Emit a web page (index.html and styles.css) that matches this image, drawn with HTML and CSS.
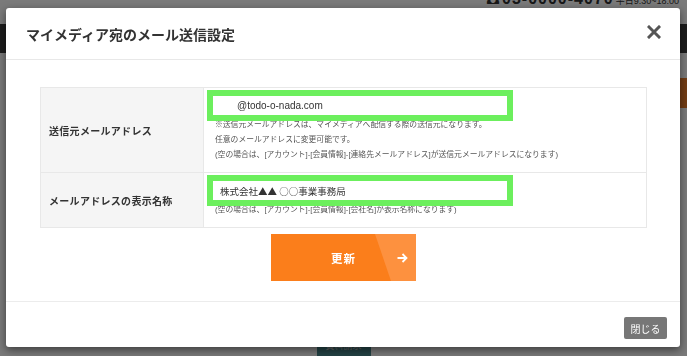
FILE: index.html
```html
<!DOCTYPE html>
<html>
<head>
	<meta charset="utf-8">
	<title>マイメディア宛のメール送信設定</title>
	<link rel="stylesheet" href="styles.css">
</head>
<body>
	<div class="site">
		<div class="site-top">
			<span class="tel">☎03-0000-4070</span>
			<span class="hours">平日9:30~18:00</span>
		</div>
		<div class="site-nav"></div>
		<div class="site-main">
			<div class="site-banner"></div>
		</div>
		<div class="site-foot">
			<div class="site-btn">資料請求</div>
		</div>
	</div>

	<div class="overlay"></div>

	<div class="modal">
		<div class="modal-header">
			<h2>マイメディア宛のメール送信設定</h2>
			<button class="modal-x" aria-label="閉じる">
				<svg width="14" height="14" viewBox="0 0 14 14">
					<path d="M2 2 L12 12 M12 2 L2 12" stroke="#555" stroke-width="3" stroke-linecap="square"/>
				</svg>
			</button>
		</div>

		<div class="modal-body">
			<table class="form-table">
				<tr class="row-mail">
					<th>送信元メールアドレス</th>
					<td>
						<input class="field mail" type="text" value="@todo-o-nada.com">
						<p class="note">※送信元メールアドレスは、マイメディアへ配信する際の送信元になります。</p>
						<p class="note">任意のメールアドレスに変更可能です。</p>
						<p class="note">(空の場合は、[アカウント]-[会員情報]-[連絡先メールアドレス]が送信元メールアドレスになります)</p>
					</td>
				</tr>
				<tr>
					<th>メールアドレスの表示名称</th>
					<td>
						<input class="field name" type="text" value="株式会社▲▲ ○○事業事務局">
						<p class="note">(空の場合は、[アカウント]-[会員情報]-[会社名]が表示名称になります)</p>
					</td>
				</tr>
			</table>

			<button class="submit-btn">
				<span class="submit-label">更新</span>
				<svg class="submit-arrow" width="11" height="10" viewBox="0 0 11 10">
					<path d="M0.5 5 H9.5 M5.5 1 L9.5 5 L5.5 9" fill="none" stroke="#fff" stroke-width="1.8"/>
				</svg>
			</button>
		</div>

		<div class="modal-footer">
			<button class="close-btn">閉じる</button>
		</div>
	</div>
</body>
</html>
```

FILE: styles.css
```css
body {
	margin: 0;
	padding: 0;
	width: 687px;
	height: 356px;
	overflow: hidden;
	background-color: #ffffff;
	font-family: "Liberation Sans", "Noto Sans CJK JP", sans-serif;
	color: #333;
}

/* page behind the dialog */
.site {
	display: flex;
	flex-direction: column;
	height: 356px;
}

.site-top {
	height: 25px;
	display: flex;
	justify-content: flex-end;
	align-items: flex-start;
	padding-right: 8px;
	gap: 2px;
}

.tel {
	font-size: 16px;
	font-weight: bold;
	line-height: 12px;
	margin-top: -7px;
	letter-spacing: 1px;
}

.hours {
	font-size: 9px;
	line-height: 10px;
	margin-top: -4px;
}

.site-nav {
	height: 30px;
	background-color: #3c3c3c;
}

.site-main {
	height: 292px;
	display: flex;
	justify-content: flex-end;
	align-items: flex-start;
}

.site-banner {
	width: 8px;
	height: 30px;
	margin-top: 25px;
	background-color: #ef7d2a;
}

.site-foot {
	display: flex;
	justify-content: center;
}

.site-btn {
	width: 54px;
	height: 20px;
	background-color: #4a8a8e;
	color: #ccc;
	font-size: 9px;
	text-align: center;
	line-height: 20px;
}

.overlay {
	position: fixed;
	top: 0;
	left: 0;
	width: 100%;
	height: 100%;
	background-color: rgba(0, 0, 0, 0.52);
}

/* dialog */
.modal {
	position: absolute;
	top: 8px;
	left: 6px;
	width: 674px;
	background-color: #fff;
	border-radius: 3px;
	box-shadow: 0 3px 8px rgba(0, 0, 0, 0.5);
}

.modal-header {
	height: 52px;
	display: flex;
	align-items: center;
	justify-content: space-between;
	padding: 0 19px 4px 20px;
	box-sizing: border-box;
	border-bottom: 1px solid #e8e8e8;
}

.modal-header h2 {
	margin: 0;
	margin-top: 4px;
	font-size: 14px;
	font-weight: bold;
	color: #333;
}

.modal-x {
	border: none;
	background: none;
	padding: 0;
	width: 14px;
	height: 14px;
	cursor: pointer;
}

.modal-x svg {
	display: block;
}

.modal-body {
	padding: 27px 33px 20px 34px;
	display: flex;
	flex-direction: column;
	align-items: center;
}

.form-table {
	width: 100%;
	border-collapse: collapse;
	border: 1px solid #e8e8e8;
}

.form-table th {
	width: 154px;
	background-color: #f5f5f5;
	border: 1px solid #e8e8e8;
	text-align: left;
	padding: 0 0 0 8px;
	font-size: 10px;
	font-weight: bold;
	color: #333;
	letter-spacing: 0.3px;
}

.form-table td {
	border: 1px solid #e8e8e8;
	padding: 8px 9px 10px 9px;
	vertical-align: top;
}

.field {
	display: block;
	width: 294px;
	height: 19px;
	box-sizing: border-box;
	border: 1px solid #fff;
	padding: 0 6px;
	font-family: "Liberation Sans", "Noto Sans CJK JP", sans-serif;
	font-size: 10px;
	color: #333;
	outline: 6px solid #6cef5d;
	background-color: #fff;
}

.field.mail {
	padding-left: 23px;
}

.field.name {
	font-family: "Noto Sans CJK JP", sans-serif;
	font-size: 9.5px;
}

.note {
	margin: 0;
	font-size: 7.8px;
	line-height: 15px;
	color: #555;
	padding-left: 2px;
}

.field + .note {
	margin-top: 2px;
}

.submit-btn {
	position: relative;
	margin-top: 6px;
	width: 145px;
	height: 47px;
	border: none;
	padding: 0;
	background-color: #fb7e1b;
	color: #fff;
	cursor: pointer;
	font-family: "Liberation Sans", "Noto Sans CJK JP", sans-serif;
}

.submit-btn::before {
	content: "";
	position: absolute;
	top: 0;
	left: 0;
	width: 100%;
	height: 100%;
	background-color: #fd913f;
	clip-path: polygon(104px 0, 100% 0, 100% 100%, 120px 100%);
}

.submit-label {
	position: relative;
	font-size: 11.5px;
	font-weight: bold;
	letter-spacing: 1px;
}

.submit-arrow {
	position: absolute;
	right: 8px;
	top: 19px;
}

.modal-footer {
	border-top: 1px solid #ececec;
	height: 46px;
	display: flex;
	justify-content: flex-end;
	align-items: flex-start;
	padding: 15px 13px 0 0;
	box-sizing: border-box;
}

.close-btn {
	width: 43px;
	height: 22px;
	border: none;
	border-radius: 2px;
	background-color: #777;
	color: #fff;
	font-family: "Liberation Sans", "Noto Sans CJK JP", sans-serif;
	font-size: 10px;
	padding: 0;
	cursor: pointer;
}
```
